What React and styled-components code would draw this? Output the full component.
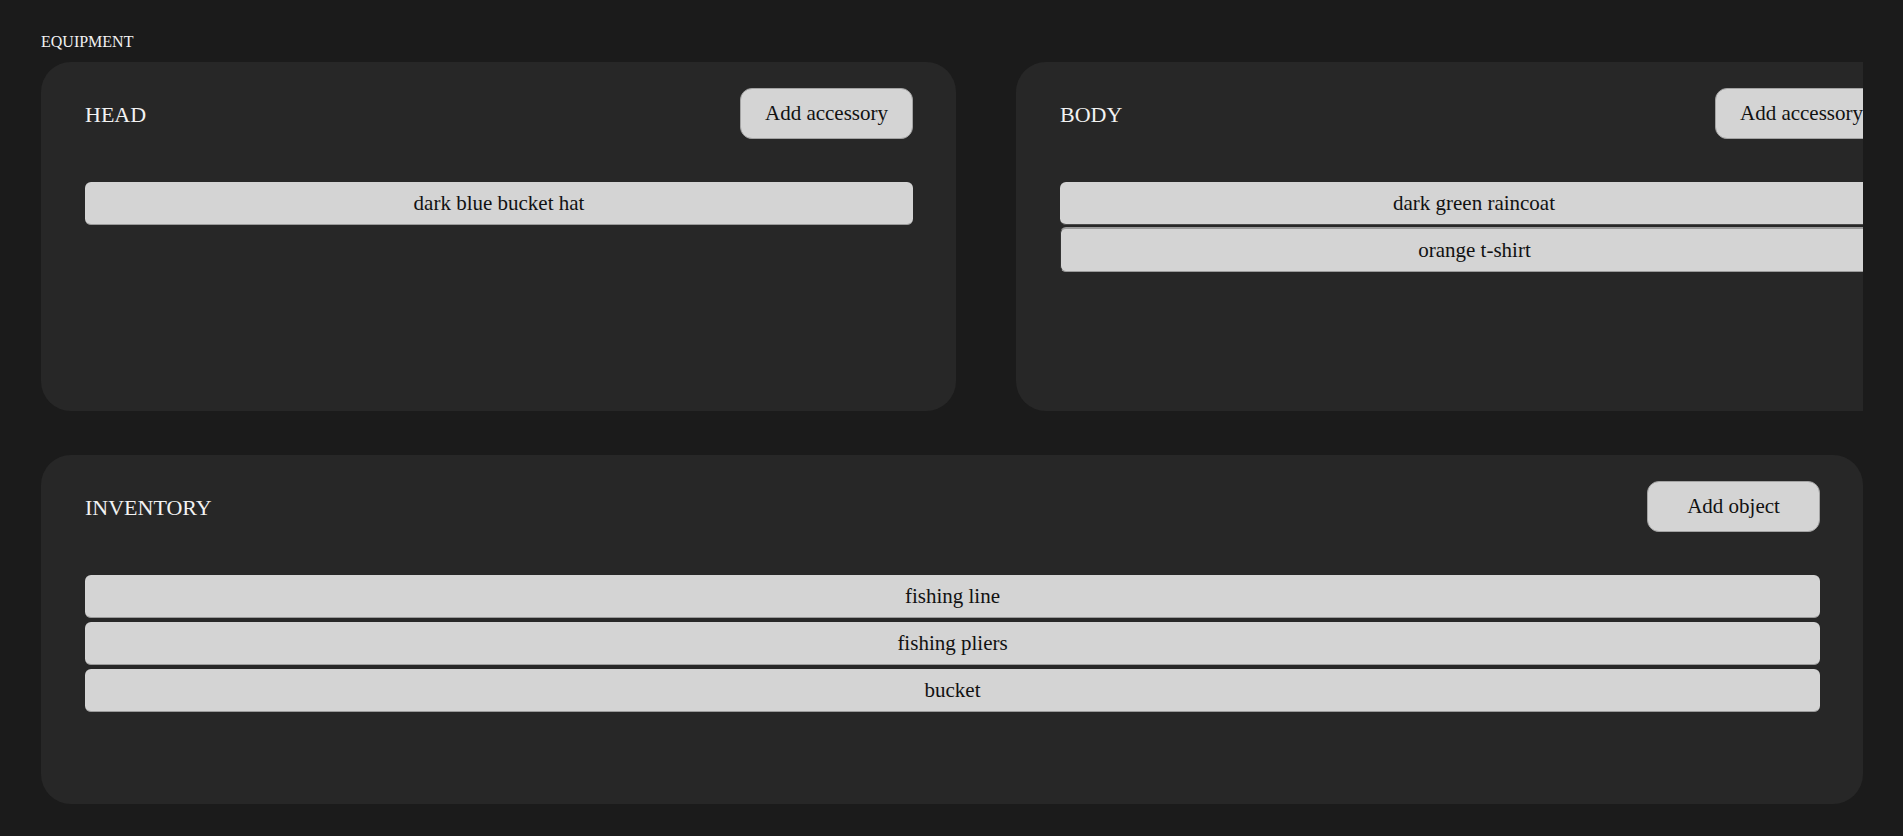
import React from 'react';
import styled, { createGlobalStyle } from 'styled-components';

const GlobalStyle = createGlobalStyle`
    html, body {
        margin: 0;
        padding: 0;
        background: #1b1b1b;
    }
    body {
        font-family: "Liberation Serif", "DejaVu Serif", serif;
        overflow: hidden;
    }
`

const Page = styled.div`
    width: 100vw;
    height: 100vh;
    box-sizing: border-box;
    padding: 33px 40px 0 41px;
    background: #1b1b1b;
`
const SectionLabel = styled.div`
    color: #f2f2f2;
    font-size: 16px;
    line-height: 18px;
    margin-bottom: 11px;
`
const Board = styled.div`
    overflow: hidden;
    display: flex;
    flex-direction: column;
    gap: 44px;
`
const EquipmentRow = styled.div`
    display: flex;
    gap: 60px;
`
const Card = styled.section`
    flex: ${p => (p.$wide ? '1 1 auto' : '0 0 915px')};
    height: 349px;
    box-sizing: border-box;
    padding: 26px 43px 0 44px;
    background: #272727;
    border-radius: 30px;
`
const CardHeader = styled.div`
    display: flex;
    align-items: center;
    justify-content: space-between;
    height: 51px;
`
const CardTitle = styled.h2`
    margin: 0;
    padding-top: 2px;
    color: #f2f2f2;
    font-size: 22px;
    font-weight: 400;
`
const AddButton = styled.button`
    width: 173px;
    height: 51px;
    flex: none;
    background: #d4d4d4;
    border: 1px solid #a3a3a3;
    border-radius: 12px;
    font-family: inherit;
    font-size: 21px;
    color: #111;
    cursor: pointer;
`
const ItemList = styled.ul`
    list-style: none;
    margin: 43px 0 0;
    padding: 0;
    display: flex;
    flex-direction: column;
    gap: 4px;
`
const Item = styled.li`
    height: ${p => (p.$dragged ? '45px' : '43px')};
    box-sizing: border-box;
    display: flex;
    align-items: center;
    justify-content: center;
    background: #d4d4d4;
    border-radius: 6px;
    border-bottom: 1px solid ${p => (p.$dark ? '#4a4a4a' : '#9a9a9a')};
    border-left: ${p => (p.$dragged ? '1px solid #333' : 'none')};
    border-top: ${p => (p.$dragged ? '2px solid #9a9a9a' : 'none')};
    margin-top: ${p => (p.$dragged ? '-2px' : '0')};
    font-size: 21px;
    color: #111;
`

const slots = [
    { title: 'HEAD', items: ['dark blue bucket hat'] },
    { title: 'BODY', items: ['dark green raincoat', 'orange t-shirt'] },
]

const inventory = ['fishing line', 'fishing pliers', 'bucket']

export default function App() {
    return (
        <Page>
            <GlobalStyle />
            <SectionLabel>EQUIPMENT</SectionLabel>
            <Board>
                <EquipmentRow>
                    {slots.map(slot => (
                        <Card key={slot.title}>
                            <CardHeader>
                                <CardTitle>{slot.title}</CardTitle>
                                <AddButton>Add accessory</AddButton>
                            </CardHeader>
                            <ItemList>
                                {slot.items.map((item, i) => (
                                    <Item
                                        key={item}
                                        $dark={slot.items.length > 1 && i === 0}
                                        $dragged={i === 1}
                                    >
                                        {item}
                                    </Item>
                                ))}
                            </ItemList>
                        </Card>
                    ))}
                </EquipmentRow>

                {/* INVENTORY */}
                <Card $wide>
                    <CardHeader>
                        <CardTitle>INVENTORY</CardTitle>
                        <AddButton>Add object</AddButton>
                    </CardHeader>
                    <ItemList>
                        {inventory.map(item => (
                            <Item key={item}>{item}</Item>
                        ))}
                    </ItemList>
                </Card>
            </Board>
        </Page>
    );
}
